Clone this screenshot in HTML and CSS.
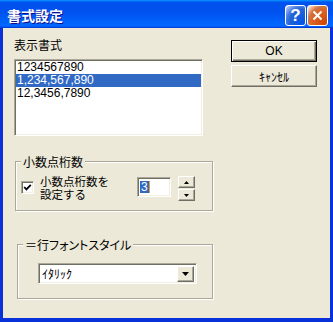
FILE: index.html
```html
<!DOCTYPE html>
<html lang="ja">
<head>
    <meta charset="UTF-8">
    <title>書式設定</title>
    <link rel="stylesheet" href="styles.css">
</head>
<body>
    <div class="window">
        <div class="titlebar">
            <span class="title">書式設定</span>
            <div class="title-buttons">
                <button class="tbtn help">?</button>
                <button class="tbtn close">
                    <svg width="11" height="11" viewBox="0 0 11 11"><path d="M1.5 1.5 L9.5 9.5 M9.5 1.5 L1.5 9.5" stroke="#fff" stroke-width="2" fill="none"/></svg>
                </button>
            </div>
        </div>
        <div class="client">
            <div class="main">
                <div class="label">表示書式</div>
                <div class="listbox">
                    <div class="item">1234567890</div>
                    <div class="item selected">1,234,567,890</div>
                    <div class="item">12,3456,7890</div>
                </div>

                <fieldset class="group decimals">
                    <legend>小数点桁数</legend>
                    <div class="decimal-row">
                        <span class="checkbox">
                            <svg width="9" height="9" viewBox="0 0 9 9"><polyline points="1.2,4 3.4,6.4 7.8,1.8" stroke="#000" stroke-width="1.8" fill="none"/></svg>
                        </span>
                        <span class="check-label">
                            <span class="check-line">小数点桁数を</span>
                            <span class="check-line">設定する</span>
                        </span>
                        <div class="edit"><span class="sel">3</span><span class="caret"></span></div>
                        <div class="spin">
                            <button class="spin-btn"><svg width="5" height="3" viewBox="0 0 5 3"><polygon points="0,3 5,3 2.5,0" fill="#000"/></svg></button>
                            <button class="spin-btn"><svg width="5" height="3" viewBox="0 0 5 3"><polygon points="0,0 5,0 2.5,3" fill="#000"/></svg></button>
                        </div>
                    </div>
                </fieldset>

                <fieldset class="group fontstyle">
                    <legend>＝行フォントスタイル</legend>
                    <div class="combo">
                        <span class="combo-text">ｲﾀﾘｯｸ</span>
                        <button class="drop"><svg width="7" height="4" viewBox="0 0 7 4"><polygon points="0,0 7,0 3.5,4" fill="#000"/></svg></button>
                    </div>
                </fieldset>
            </div>
            <div class="side">
                <button class="btn default">OK</button>
                <button class="btn">ｷｬﾝｾﾙ</button>
            </div>
        </div>
    </div>
</body>
</html>
```

FILE: styles.css
```css
body {
    margin: 0;
    background: #fff;
    font-family: "Noto Sans CJK JP", sans-serif;
    font-size: 12px;
    color: #000;
}

.window {
    width: 333px;
    height: 322px;
    display: flex;
    flex-direction: column;
    background: #0831d9;
}

.titlebar {
    height: 28px;
    flex: none;
    box-sizing: border-box;
    display: flex;
    justify-content: space-between;
    align-items: flex-start;
    padding: 5px 5px 0 7px;
    background: linear-gradient(#0997ff 0%, #0053ee 8%, #0050ee 40%, #0066ff 88%, #0066ff 93%, #005bff 95%, #003dd7 96%, #003dd7 100%);
}

.title {
    color: #fff;
    font-weight: bold;
    font-size: 14px;
    line-height: 16px;
    margin-top: 2px;
    text-shadow: 1px 1px #0f1089;
}

.title-buttons {
    display: flex;
    gap: 1px;
}

.tbtn {
    width: 21px;
    height: 21px;
    box-sizing: border-box;
    border: 1px solid #fff;
    border-radius: 3px;
    padding: 0;
    display: flex;
    align-items: center;
    justify-content: center;
}

.help {
    background: radial-gradient(circle at 90% 90%, #0054e9 0%, #2263d5 55%, #4479e4 70%, #a3bbec 90%, #fff 100%);
    color: #fff;
    font: bold 17px "Liberation Sans", sans-serif;
}

.close {
    background: radial-gradient(circle at 90% 90%, #cc4600 0%, #dc6527 55%, #cd7546 70%, #ffccb2 90%, #fff 100%);
}

.client {
    flex: 1;
    margin: 0 3px 4px 3px;
    background: #ece9d8;
    display: flex;
}

.main {
    width: 228px;
    box-sizing: border-box;
    padding: 10px 0 0 11px;
}

.label {
    line-height: 13px;
}

.listbox {
    margin-top: 8px;
    width: 189px;
    height: 77px;
    box-sizing: border-box;
    background: #fff;
    border: 1px solid;
    border-color: #aca899 #fff #fff #aca899;
    box-shadow: inset 1px 1px #716f64, inset -1px -1px #f1efe2;
    padding: 1px;
}

.item {
    font-family: "Liberation Sans", sans-serif;
    line-height: 13px;
    height: 13px;
    padding-left: 1px;
}

.item.selected {
    background: #316ac5;
    color: #fff;
}

.group {
    margin: 19px 0 0 1px;
    padding: 0;
    width: 198px;
    box-sizing: border-box;
    border: 1px solid #aca899;
    box-shadow: inset 1px 1px #fff, 1px 1px #fff;
}

.group legend {
    margin-left: 5px;
    padding: 0 2px;
    line-height: 13px;
    background: #ece9d8;
}

.fontstyle legend {
    font-feature-settings: "palt";
}

.decimal-row {
    display: flex;
    align-items: flex-start;
    padding: 7px 0 9px 5px;
}

.checkbox {
    width: 13px;
    height: 13px;
    box-sizing: border-box;
    margin-top: 6px;
    background: #fff;
    border: 1px solid;
    border-color: #aca899 #fff #fff #aca899;
    box-shadow: inset 1px 1px #716f64, inset -1px -1px #f1efe2;
    display: flex;
    align-items: center;
    justify-content: center;
}

.check-label {
    width: 97px;
    margin-left: 6px;
    display: flex;
    flex-direction: column;
}

.check-line {
    font-size: 11.5px;
    line-height: 13px;
    height: 13px;
}

.edit {
    width: 34px;
    height: 20px;
    box-sizing: border-box;
    margin-top: 2px;
    background: #fff;
    border: 1px solid;
    border-color: #aca899 #fff #fff #aca899;
    box-shadow: inset 1px 1px #716f64, inset -1px -1px #f1efe2;
    padding: 3px 0 0 2px;
    display: flex;
    align-items: flex-start;
}

.sel {
    font-family: "Liberation Sans", sans-serif;
    background: #316ac5;
    color: #fff;
    line-height: 12px;
    padding: 0 1px;
}

.caret {
    width: 1px;
    height: 12px;
    background: #e8a020;
}

.spin {
    margin: 1px 0 0 7px;
    display: flex;
    flex-direction: column;
    gap: 1px;
}

.spin-btn {
    width: 17px;
    height: 12px;
    box-sizing: border-box;
    padding: 0;
    background: #ece9d8;
    border: 1px solid;
    border-color: #fff #716f64 #716f64 #fff;
    box-shadow: inset -1px -1px #aca899;
    display: flex;
    align-items: center;
    justify-content: center;
}

.fontstyle {
    margin: 27px 0 0 3px;
    width: 196px;
}

.combo {
    margin: 12px 0 14px 20px;
    width: 159px;
    height: 21px;
    box-sizing: border-box;
    background: #fff;
    border: 1px solid;
    border-color: #aca899 #fff #fff #aca899;
    box-shadow: inset 1px 1px #716f64, inset -1px -1px #f1efe2;
    padding: 2px;
    display: flex;
    justify-content: space-between;
    align-items: center;
}

.combo-text {
    padding-left: 1px;
    line-height: 13px;
}

.drop {
    width: 17px;
    height: 16px;
    box-sizing: border-box;
    padding: 0;
    background: #ece9d8;
    border: 1px solid;
    border-color: #fff #716f64 #716f64 #fff;
    box-shadow: inset -1px -1px #aca899;
    display: flex;
    align-items: center;
    justify-content: center;
}

.side {
    padding-top: 12px;
    display: flex;
    flex-direction: column;
    gap: 3px;
}

.btn {
    width: 86px;
    height: 22px;
    box-sizing: border-box;
    padding: 0;
    font-family: "Liberation Sans", "Noto Sans CJK JP", sans-serif;
    font-size: 12px;
    color: #000;
    background: #ece9d8;
    border: 1px solid;
    border-color: #fff #716f64 #716f64 #fff;
    box-shadow: inset -1px -1px #aca899;
}

.btn.default {
    border: 1px solid #000;
    box-shadow: inset 1px 1px #fff, inset -1px -1px #716f64, inset -2px -2px #aca899;
}
```
